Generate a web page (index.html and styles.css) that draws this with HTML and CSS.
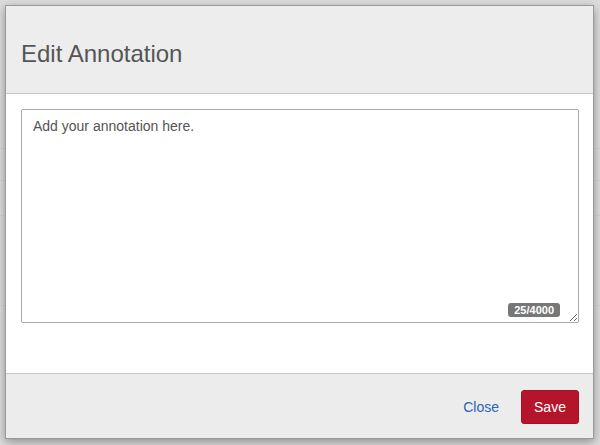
FILE: index.html
```html
<!DOCTYPE html>
<html>
<head>
<meta charset="utf-8">
<link rel="stylesheet" href="styles.css">
</head>
<body>
<div class="backdrop">
  <div class="line l1"></div>
  <div class="line l2"></div>
  <div class="line l3"></div>
  <div class="line l4"></div>
</div>
<div class="modal">
  <div class="modal-header">
    <h4 class="modal-title">Edit Annotation</h4>
  </div>
  <div class="modal-body">
    <div class="field">
      <textarea class="annotation" placeholder="Add your annotation here.">Add your annotation here.</textarea>
      <span class="counter">25/4000</span>
    </div>
  </div>
  <div class="modal-footer">
    <a class="btn-link" href="#">Close</a>
    <button class="btn-save">Save</button>
  </div>
</div>
</body>
</html>
```
FILE: styles.css
```css
* { box-sizing: border-box; }
html, body {
  margin: 0;
  padding: 0;
  width: 600px;
  height: 445px;
  overflow: hidden;
  background: #dcdcdc;
  font-family: "Liberation Sans", Arial, sans-serif;
}
body { padding: 5px 6px 0 5px; }
.backdrop { position: absolute; inset: 0; }
.line { position: absolute; left: 0; right: 0; height: 1px; background: #d4d4d4; }
.l1 { top: 148px; }
.l2 { top: 180px; }
.l3 { top: 215px; }
.l4 { top: 305px; }
.modal {
  position: relative;
  width: 589px;
  height: 434px;
  background: #fff;
  border: 1px solid #999;
  box-shadow: 0 3px 9px rgba(0,0,0,0.35);
  display: flex;
  flex-direction: column;
}
.modal-header {
  height: 88px;
  background: #ededed;
  border-bottom: 1px solid #c8c8c8;
  padding: 0 15px;
  display: flex;
  align-items: center;
}
.modal-title {
  margin: 0;
  font-weight: normal;
  font-size: 24px;
  color: #555;
  padding-top: 9px;
}
.modal-body {
  flex: 1;
  padding: 15px 14px 0 15px;
}
.field { position: relative; }
.annotation {
  display: block;
  width: 100%;
  height: 214px;
  border: 1px solid #aaa;
  border-radius: 2px;
  padding: 7px 11px;
  font-family: "Liberation Sans", Arial, sans-serif;
  font-size: 14px;
  line-height: 18px;
  color: #555;
  resize: vertical;
  outline: none;
}
.counter {
  position: absolute;
  right: 19px;
  bottom: 6px;
  background: #777;
  color: #fff;
  font-size: 11px;
  font-weight: bold;
  line-height: 14px;
  padding: 0 6px;
  border-radius: 3px;
}
.modal-footer {
  height: 65px;
  background: #ececec;
  border-top: 1px solid #c8c8c8;
  display: flex;
  justify-content: flex-end;
  align-items: center;
  gap: 22px;
  padding: 2px 14px 0 15px;
}
.btn-link {
  color: #2a64b8;
  text-decoration: none;
  font-size: 14px;
}
.btn-save {
  background: #b5152b;
  color: #fff;
  border: 1px solid #a51226;
  border-radius: 3px;
  font-family: "Liberation Sans", Arial, sans-serif;
  font-size: 14px;
  height: 34px;
  width: 58px;
  padding: 0;
}
```
